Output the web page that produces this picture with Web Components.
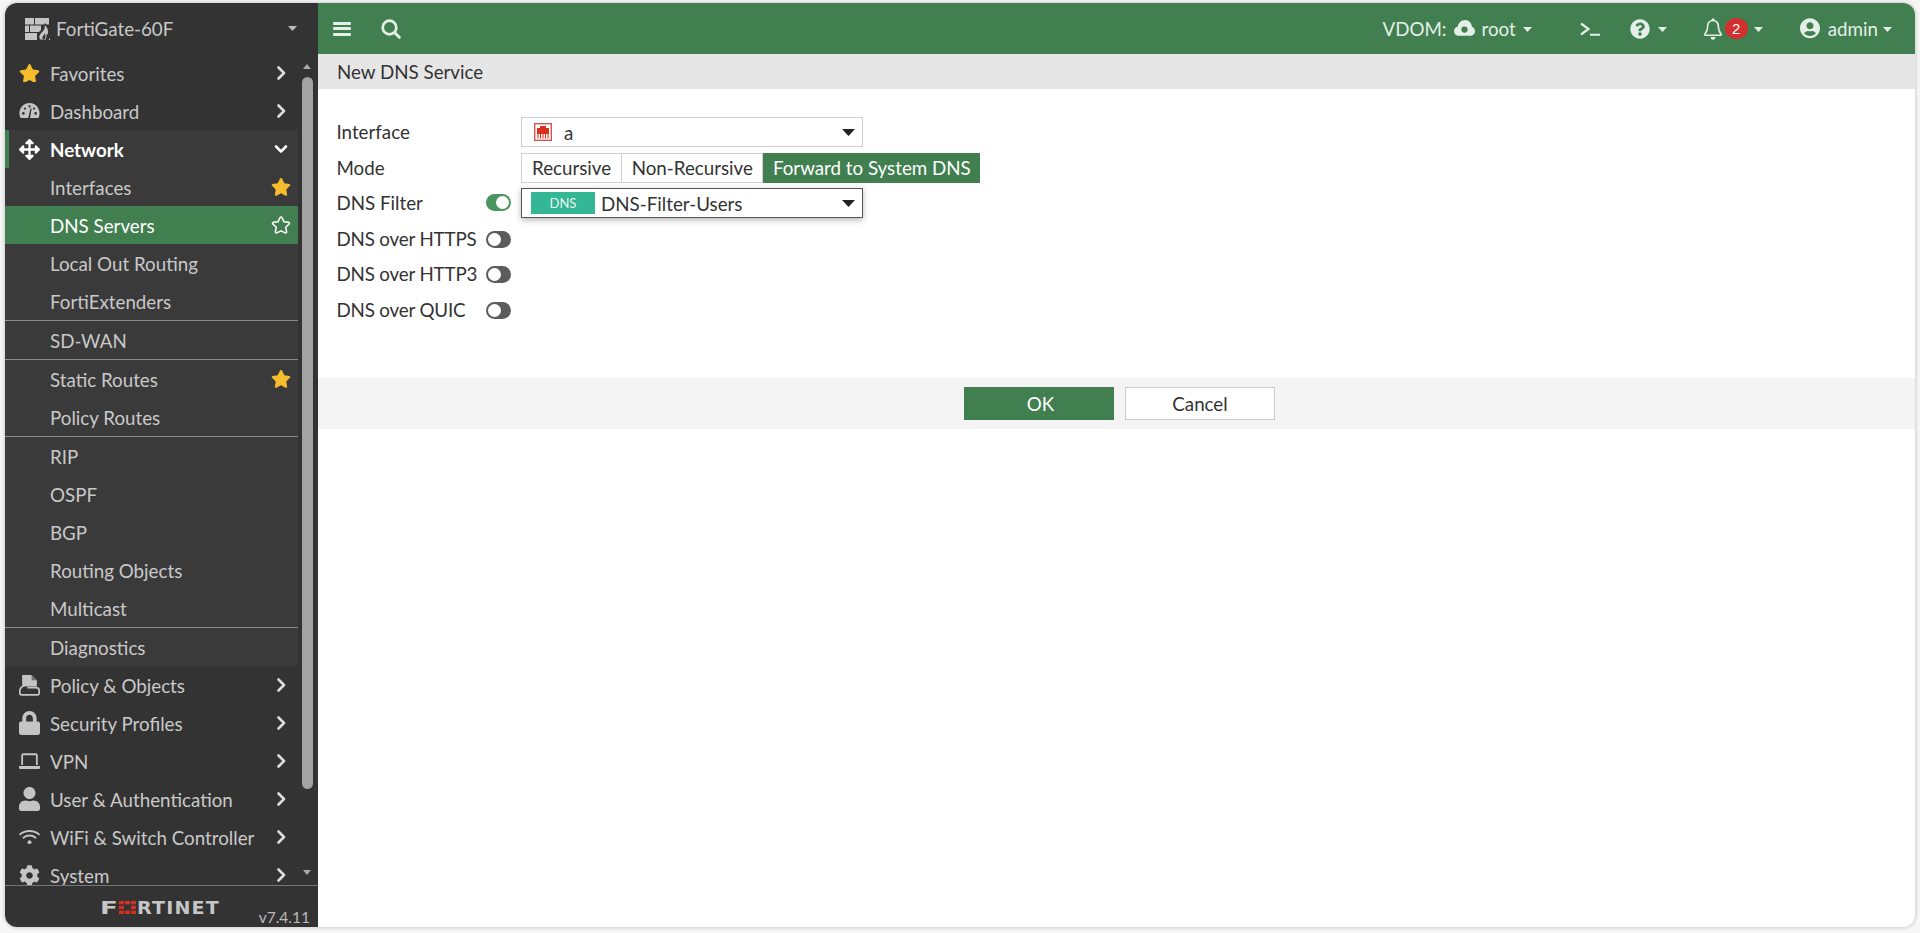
<!DOCTYPE html>
<html><head><meta charset="utf-8"><title>FortiGate-60F</title>
<style>
html,body{margin:0;height:100%;background:#f6f6f6;font-family:Lato,"Liberation Sans",sans-serif;overflow:hidden}
body{padding:3px 5px 6px 5px;box-sizing:border-box}
</style></head><body>
<x-app>
<x-sidebar slot="side">
  <x-nav icon="star" chev="right">Favorites</x-nav>
  <x-nav icon="gauge" chev="right">Dashboard</x-nav>
  <x-nav-group>
    <x-nav icon="move" chev="down" active>Network</x-nav>
    <x-nav sub fav="on">Interfaces</x-nav>
    <x-nav sub fav="off" current>DNS Servers</x-nav>
    <x-nav sub>Local Out Routing</x-nav>
    <x-nav sub>FortiExtenders</x-nav>
    <x-nav sub sep>SD-WAN</x-nav>
    <x-nav sub sep fav="on">Static Routes</x-nav>
    <x-nav sub>Policy Routes</x-nav>
    <x-nav sub sep>RIP</x-nav>
    <x-nav sub>OSPF</x-nav>
    <x-nav sub>BGP</x-nav>
    <x-nav sub>Routing Objects</x-nav>
    <x-nav sub>Multicast</x-nav>
    <x-nav sub sep>Diagnostics</x-nav>
  </x-nav-group>
  <x-nav icon="policy" chev="right">Policy &amp; Objects</x-nav>
  <x-nav icon="lock" chev="right">Security Profiles</x-nav>
  <x-nav icon="laptop" chev="right">VPN</x-nav>
  <x-nav icon="user" chev="right">User &amp; Authentication</x-nav>
  <x-nav icon="wifi" chev="right">WiFi &amp; Switch Controller</x-nav>
  <x-nav icon="cog" chev="right">System</x-nav>
</x-sidebar>
<x-topbar slot="top"></x-topbar>
<x-page slot="main" heading="New DNS Service">
  <x-row label="Interface"><x-select icon="port">a</x-select></x-row>
  <x-row label="Mode"><x-seg><x-seg-item>Recursive</x-seg-item><x-seg-item mid>Non-Recursive</x-seg-item><x-seg-item on>Forward to System DNS</x-seg-item></x-seg></x-row>
  <x-row label="DNS Filter" toggle="on"><x-select badge="DNS" focus>DNS-Filter-Users</x-select></x-row>
  <x-row label="DNS over HTTPS" toggle="off"></x-row>
  <x-row label="DNS over HTTP3" toggle="off"></x-row>
  <x-row label="DNS over QUIC" toggle="off"></x-row>
  <x-btn slot="actions" primary>OK</x-btn>
  <x-btn slot="actions">Cancel</x-btn>
</x-page>
</x-app>
<script>
const FS='18.75px';
const STAR='M259.3 17.8L194 150.2 47.9 171.5c-26.2 3.8-36.7 36.1-17.7 54.6l105.7 103-25 145.5c-4.5 26.3 23.2 46 46.4 33.7L288 439.6l130.7 68.7c23.2 12.2 50.9-7.4 46.4-33.7l-25-145.5 105.7-103c19-18.5 8.5-50.8-17.7-54.6L382 150.2 316.7 17.8c-11.7-23.6-45.6-23.9-57.4 0z';
const ICONS={
star:`<svg viewBox="0 0 576 512"><path fill="#f7bc2c" d="${STAR}"/></svg>`,
staro:`<svg viewBox="-30 -30 636 572"><path fill="none" stroke="currentColor" stroke-width="50" d="${STAR}"/></svg>`,
gauge:`<svg viewBox="0 0 24 20"><path fill="currentColor" d="M12 1C5.4 1 .5 6.300.5 13c0 2 .5 3.800 1.300 5.300h20.400c.8-1.500 1.300-3.300 1.300-5.300C23.500 6.300 18.600 1 12 1z"/><g fill="#333"><circle cx="5" cy="13" r="1.500"/><circle cx="19" cy="13" r="1.500"/><circle cx="6.800" cy="7.500" r="1.300"/><circle cx="12" cy="5" r="1.300"/><circle cx="17.200" cy="7.500" r="1.300"/><path d="M10.500 18.300l2.700-11.300 1.200.3-1.800 11z"/></g></svg>`,
move:`<svg viewBox="0 0 512 512"><path fill="currentColor" d="M352.201 425.775l-79.196 79.196c-9.373 9.373-24.568 9.373-33.941 0l-79.196-79.196c-15.119-15.119-4.411-40.971 16.971-40.97h51.162L228 284H127.196v51.162c0 21.382-25.851 32.09-40.971 16.971L7.029 272.937c-9.373-9.373-9.373-24.569 0-33.941L86.225 159.8c15.119-15.119 40.971-4.411 40.971 16.971V228H228V127.196h-51.23c-21.382 0-32.09-25.851-16.971-40.971l79.196-79.196c9.373-9.373 24.568-9.373 33.941 0l79.196 79.196c15.119 15.119 4.411 40.971-16.971 40.971h-51.162V228h100.804v-51.162c0-21.382 25.851-32.09 40.97-16.971l79.196 79.196c9.373 9.373 9.373 24.569 0 33.941L425.773 352.2c-15.119 15.119-40.971 4.411-40.97-16.971V284H284v100.804h51.23c21.382 0 32.09 25.851 16.971 40.971z"/></svg>`,
policy:`<svg viewBox="0 0 20 20"><path fill="currentColor" d="M3 0h9l5 5v6H3z"/><path fill="#333" d="M12 0v5h5z" opacity=".55"/><path fill="none" stroke="currentColor" stroke-width="1.600" d="M5 10.500C3 10.500.8 12.500.8 15v2.200c0 1 .7 1.700 1.700 1.700h15c1 0 1.700-.7 1.700-1.700V15c0-1.800-1.200-3-3-3H8"/></svg>`,
lock:`<svg viewBox="0 0 448 512"><path fill="currentColor" d="M400 224h-24v-72C376 68.200 307.800 0 224 0S72 68.200 72 152v72H48c-26.500 0-48 21.500-48 48v192c0 26.500 21.500 48 48 48h352c26.500 0 48-21.500 48-48V272c0-26.500-21.500-48-48-48zm-104 0H152v-72c0-39.700 32.300-72 72-72s72 32.300 72 72v72z"/></svg>`,
laptop:`<svg viewBox="0 0 20 16"><path fill="none" stroke="currentColor" stroke-width="1.700" d="M3 11.500V2.200c0-.6.4-1 1-1h12c.6 0 1 .4 1 1v9.300"/><path fill="currentColor" d="M0 12.500h20v1.500c0 .8-.7 1.500-1.500 1.500h-17C.7 15.500 0 14.800 0 14z"/></svg>`,
user:`<svg viewBox="0 0 448 512"><path fill="currentColor" d="M224 256c70.700 0 128-57.300 128-128S294.700 0 224 0 96 57.300 96 128s57.300 128 128 128zm89.600 32h-16.700c-22.200 10.200-46.900 16-72.900 16s-50.600-5.800-72.900-16h-16.700C60.200 288 0 348.200 0 422.400V464c0 26.500 21.500 48 48 48h352c26.500 0 48-21.500 48-48v-41.600c0-74.200-60.200-134.400-134.400-134.400z"/></svg>`,
wifi:`<svg viewBox="0 0 20 15"><g fill="none" stroke="currentColor" stroke-width="1.700" stroke-linecap="round"><path d="M1 5.200C5.800.8 14.200.8 19 5.200"/><path d="M4.200 8.300c3.200-2.800 8.400-2.800 11.600 0"/></g><circle cx="10" cy="12.500" r="1.900" fill="currentColor"/></svg>`,
cog:`<svg viewBox="0 0 512 512"><path fill="currentColor" d="M487.400 315.700l-42.600-24.600c4.300-23.200 4.300-47 0-70.200l42.600-24.600c4.900-2.800 7.100-8.600 5.500-14-11.100-35.600-30-67.800-54.700-94.600-3.800-4.100-10-5.100-14.800-2.300L380.800 110c-17.900-15.400-38.500-27.300-60.800-35.100V25.800c0-5.600-3.900-10.500-9.400-11.700-36.700-8.200-74.300-7.800-109.200 0-5.500 1.200-9.400 6.100-9.400 11.700V75c-22.200 7.900-42.800 19.800-60.800 35.100L88.700 85.500c-4.900-2.800-11-1.900-14.800 2.300-24.700 26.700-43.600 58.900-54.700 94.600-1.700 5.400.6 11.200 5.500 14L67.300 221c-4.300 23.200-4.300 47 0 70.200l-42.600 24.600c-4.900 2.800-7.100 8.600-5.500 14 11.100 35.600 30 67.800 54.700 94.600 3.800 4.100 10 5.100 14.800 2.300l42.600-24.600c17.900 15.400 38.500 27.300 60.800 35.100v49.200c0 5.600 3.900 10.500 9.400 11.700 36.700 8.200 74.300 7.800 109.200 0 5.500-1.200 9.400-6.100 9.400-11.700v-49.200c22.200-7.900 42.800-19.800 60.800-35.100l42.600 24.600c4.900 2.800 11 1.900 14.800-2.300 24.700-26.700 43.600-58.900 54.700-94.600 1.500-5.500-.7-11.300-5.600-14.100zM256 336c-44.100 0-80-35.900-80-80s35.900-80 80-80 80 35.900 80 80-35.900 80-80 80z"/></svg>`,
right:`<svg viewBox="0 0 18 18"><path fill="none" stroke="currentColor" stroke-width="2.600" stroke-linecap="round" stroke-linejoin="round" d="M6.500 3.500L12 9l-5.500 5.500"/></svg>`,
down:`<svg viewBox="0 0 18 18"><path fill="none" stroke="currentColor" stroke-width="2.600" stroke-linecap="round" stroke-linejoin="round" d="M4 6.500L9 11.500l5-5"/></svg>`,
firewall:`<svg viewBox="0 0 25 22"><g fill="#c4c4c4"><rect x="0" y="0" width="9" height="6.500"/><rect x="10" y="0" width="14" height="6.500"/><rect x="0" y="7.500" width="4" height="6.500"/><rect x="5" y="7.500" width="11" height="6.500"/><rect x="0" y="15" width="12" height="7"/></g><path fill="#333" d="M13 22c-3-5 1-8 4-11l3-6 5 6v11z"/><path fill="#c4c4c4" d="M15 21.500c-2-4 1-6 3.500-9 1-1.300 1.500-3 1.300-5.500 2 1.500 3.700 4.500 3.200 8-.2 1.200-.7 1.500-1.200 1-.4 1.500 0 3.500-1 5.500zm2.500-.5h2.500c.8-2.200.5-4 0-5.500-1.200 2-3 3-2.500 5.500zM24 20.500h1V22h-1z"/></svg>`,
port:`<svg viewBox="0 0 18 18"><rect x=".7" y=".7" width="16.600" height="16.600" fill="#fff" stroke="#d9534f" stroke-width="1.400"/><path fill="#d8321f" d="M3 11V5h3V3h6v2h3v6z"/><path stroke="#d8321f" stroke-width="1.100" d="M4 11v4.500M6.500 11v4.500M9 11v4.500M11.500 11v4.500M14 11v4.500"/></svg>`,
search:`<svg viewBox="0 0 20 20"><circle cx="8.500" cy="8.500" r="6.800" fill="none" stroke="currentColor" stroke-width="2.700"/><path stroke="currentColor" stroke-width="3" stroke-linecap="round" d="M13.800 13.800l4.500 4.500"/></svg>`,
cloud:`<svg viewBox="0 0 22 17"><path fill="currentColor" d="M5 16.500C2.200 16.500 0 14.400 0 11.700c0-2.300 1.500-4.200 3.800-4.700C4.500 3 7.700 0 11.500 0c3.400 0 6.200 2.300 7 5.500-.1 1 .2 1.200 .6 1.500 1.800 1 2.900 2.700 2.900 4.700 0 2.700-2.200 4.800-5 4.800z"/><circle cx="11" cy="10" r="3.300" fill="#417f50"/></svg>`,
cli:`<svg viewBox="0 0 20 14"><path fill="none" stroke="currentColor" stroke-width="2.200" d="M1 1.500L8.500 7 1 12.500"/><path stroke="currentColor" stroke-width="2" d="M10 12.800h10"/></svg>`,
help:`<svg viewBox="0 0 512 512"><path fill="currentColor" d="M504 256c0 136.997-111.043 248-248 248S8 392.997 8 256C8 119.083 119.043 8 256 8s248 111.083 248 248zM262.655 90c-54.497 0-89.255 22.957-116.549 63.758-3.536 5.286-2.353 12.415 2.715 16.258l34.699 26.310c5.205 3.947 12.621 3.008 16.665-2.122 17.864-22.658 30.113-35.797 57.303-35.797 20.429 0 45.698 13.148 45.698 32.958 0 14.976-12.363 22.667-32.534 33.976C247.128 238.528 216 254.941 216 296v4c0 6.627 5.373 12 12 12h56c6.627 0 12-5.373 12-12v-1.333c0-28.462 83.186-29.647 83.186-106.667 0-58.002-60.165-102-116.531-102zM256 338c-25.365 0-46 20.635-46 46 0 25.364 20.635 46 46 46s46-20.636 46-46c0-25.365-20.635-46-46-46z"/></svg>`,
bell:`<svg viewBox="0 0 18 22"><path fill="none" stroke="currentColor" stroke-width="1.600" stroke-linejoin="round" d="M9 2.500c-3.200 0-5.300 2.400-5.300 5.500 0 4.500-1 6-2.900 8.300-.3.400 0 1 .5 1h15.400c.5 0 .8-.6.500-1C15.300 14 14.300 12.500 14.300 8c0-3.100-2.100-5.500-5.300-5.500z"/><circle cx="9" cy="1.800" r="1.500" fill="currentColor"/><path fill="currentColor" d="M6.500 19h5c0 1.500-1 2.700-2.500 2.700S6.500 20.500 6.500 19z"/></svg>`,
account:`<svg viewBox="0 0 496 512"><path fill="currentColor" d="M248 8C111 8 0 119 0 256s111 248 248 248 248-111 248-248S385 8 248 8zm0 96c48.600 0 88 39.400 88 88s-39.400 88-88 88-88-39.400-88-88 39.400-88 88-88zm0 344c-58.700 0-111.300-26.600-146.500-68.200 18.800-35.400 55.600-59.800 98.500-59.800 2.400 0 4.800.4 7.100 1.100 13 4.200 26.600 6.900 40.900 6.900 14.300 0 28-2.700 40.900-6.900 2.300-.7 4.700-1.100 7.100-1.100 42.900 0 79.700 24.400 98.500 59.800C359.300 421.400 306.700 448 248 448z"/></svg>`
};
function def(name,css,html){
  customElements.define(name,class extends HTMLElement{
    constructor(){super();this.attachShadow({mode:'open'});}
    connectedCallback(){
      const h=typeof html==='function'?html(this):html;
      this.shadowRoot.innerHTML=`<style>${css}</style>${h}`;
    }
  });
}
const caret=(c)=>`<svg width="9" height="5" viewBox="0 0 9 5" style="display:block"><path fill="${c||'currentColor'}" d="M0 0h9L4.500 5z"/></svg>`;

def('x-icon',`:host{display:inline-flex;align-items:center;justify-content:center;line-height:0}svg{display:block;width:var(--w,100%);height:var(--h,auto)}`,e=>ICONS[e.getAttribute('name')]||'');

def('x-app',`:host{display:flex;height:100%;border-radius:12px;overflow:hidden;box-shadow:0 0 4px rgba(0,0,0,.25);background:#fff}
.col{flex:1;min-width:0;display:flex;flex-direction:column}`,
`<slot name="side"></slot><div class="col"><slot name="top"></slot><slot name="main"></slot></div>`);

def('x-sidebar',`:host{display:flex;flex-direction:column;width:313px;flex:none;background:#333;color:#ccc;position:relative;font-size:${FS}}
.head{height:51px;flex:none;display:flex;align-items:center;padding:0 21px 0 20px;color:#c8c8c8;box-sizing:border-box}
.head x-icon{width:25px;height:22px;margin-right:6px}
.head span{flex:1;font-size:${FS}}
.head .c{color:#bbb}
.nav{flex:1;min-height:0;overflow:hidden;width:293px}
.foot{height:42px;flex:none;border-top:1px solid #777;width:313px;box-sizing:border-box;display:flex}
.foot x-logo{margin:15px 0 0 95px}
.ver{margin:22px 8px 0 auto;font-size:15.500px;color:#bbb;line-height:18px}
.thumb{position:absolute;left:297px;top:74px;width:11px;height:712px;background:#a3a3a3;border-radius:6px}
.up,.dn{position:absolute;left:298px;width:0;height:0;border-left:4.500px solid transparent;border-right:4.500px solid transparent}
.up{top:61px;border-bottom:5px solid #aaa}.dn{top:867px;border-top:5px solid #aaa}`,
`<div class="head"><x-icon name="firewall"></x-icon><span>FortiGate-60F</span><div class="c">${caret()}</div></div>
<div class="nav"><slot></slot></div>
<div class="foot"><x-logo></x-logo><div class="ver">v7.4.11</div></div>
<div class="up"></div><div class="thumb"></div><div class="dn"></div>`);

def('x-nav-group',`:host{display:block;background:#3a3a3a}`,`<slot></slot>`);

def('x-nav',`:host{display:flex;align-items:center;height:38px;box-sizing:border-box;color:#c9c9c9;font-size:${FS};padding-right:8px}
:host([sep]){height:39px;border-top:1px solid #8a8a8a}
:host([active]){color:#fff;font-weight:700;box-shadow:inset 4px 0 0 #417f50}
:host([current]){background:#417f50;color:#fff}
.i{width:45px;flex:none;display:flex;justify-content:center;padding-left:4px;box-sizing:border-box}
.i x-icon{width:21px;height:20px;color:#c4c4c4}
:host([active]) .i x-icon{color:#fff}
.t{flex:1;white-space:nowrap}
.r{width:18px;height:18px;flex:none;color:#ddd;display:flex;align-items:center;justify-content:center}
.r x-icon{width:18px;height:18px;flex:none}
.r x-icon.s{width:20px;height:19px}
:host([active]) .r{color:#fff}`,
e=>{const ic=e.getAttribute('icon'),ch=e.getAttribute('chev'),f=e.getAttribute('fav');
 const r=ch?`<x-icon name="${ch}"></x-icon>`:f==='on'?`<x-icon class="s" name="star"></x-icon>`:f==='off'?`<x-icon class="s" name="staro" style="color:#fff"></x-icon>`:'';
 return `<div class="i">${ic?`<x-icon name="${ic}"></x-icon>`:''}</div><div class="t"><slot></slot></div><div class="r">${r}</div>`;});

def('x-logo',`:host{display:flex;align-items:center;height:13px;color:#c6c6c6;font:700 18px/13px "DejaVu Sans",sans-serif}
.f{display:inline-block;width:18px;transform:scaleX(1.45);transform-origin:left center}
svg{width:17px;height:13px;display:block;margin-right:1px;margin-left:1px}
.r{display:inline-block;transform:scaleX(1.06);transform-origin:left center;letter-spacing:1.100px;white-space:nowrap}`,
`<span class="f">F</span><svg viewBox="0 0 17 13"><g fill="#d3301f"><rect width="5" height="3.400"/><rect x="6" width="5" height="3.400"/><rect x="12" width="5" height="3.400"/><rect y="4.800" width="5" height="3.400"/><rect x="12" y="4.800" width="5" height="3.400"/><rect y="9.600" width="5" height="3.400"/><rect x="6" y="9.600" width="5" height="3.400"/><rect x="12" y="9.600" width="5" height="3.400"/></g></svg><span class="r">RTINET</span>`);

def('x-topbar',`:host{display:flex;align-items:center;height:51px;flex:none;background:#417f50;color:#e4efe7;font-size:${FS};padding:0 23px 0 15px;box-sizing:border-box}
x-icon{flex:none}
.sp{flex:1}
.ham{width:18px;height:14px;display:flex;flex-direction:column;justify-content:space-between}
.ham i{display:block;height:3px;border-radius:1px;background:currentColor}
.c{flex:none;margin-left:7px;margin-top:1px}
.g{display:flex;align-items:center;flex:none}
.badge{width:23px;height:21px;border-radius:50%;background:#d32f2f;color:#fff;font-size:15px;line-height:21px;text-align:center;margin-left:3px;font-family:"Liberation Sans",sans-serif}`,
`<div class="ham"><i></i><i></i><i></i></div>
<x-icon name="search" style="width:20px;height:20px;margin-left:30px"></x-icon>
<div class="sp"></div>
<div class="g"><span>VDOM:</span><x-icon name="cloud" style="width:21px;height:17px;margin:0 7px 0 7px"></x-icon><span>root</span><div class="c">${caret()}</div></div>
<x-icon name="cli" style="width:20px;height:14px;margin-left:48px"></x-icon>
<x-icon name="help" style="width:20px;height:20px;margin-left:30px"></x-icon><div class="c" style="margin-left:8px">${caret()}</div>
<x-icon name="bell" style="width:18px;height:21px;margin-left:37px"></x-icon><div class="badge">2</div><div class="c" style="margin-left:6px">${caret()}</div>
<x-icon name="account" style="width:20px;height:20px;margin-left:37px"></x-icon><span style="margin-left:8px">admin</span><div class="c" style="margin-left:5px">${caret()}</div>`);

def('x-page',`:host{display:flex;flex-direction:column;flex:1;min-height:0;color:#333;font-size:${FS}}
.title{height:35px;flex:none;background:#e6e6e6;display:flex;align-items:center;padding-left:19px;box-sizing:border-box}
.form{height:289px;flex:none;box-sizing:border-box;padding:28px 0 0 18.500px;display:flex;flex-direction:column;gap:5.600px}
.act{height:51px;flex:none;background:#f4f4f4;display:flex;align-items:center;justify-content:center;gap:11px;padding-left:6px;box-sizing:border-box}`,
e=>`<div class="title">${e.getAttribute('heading')}</div><div class="form"><slot></slot></div><div class="act"><slot name="actions"></slot></div>`);

def('x-row',`:host{display:flex;align-items:center;height:30px;flex:none}
.l{width:184.500px;flex:none;display:flex;align-items:center;box-sizing:border-box;padding-right:10px;white-space:nowrap;padding-bottom:1px}
.l span{flex:1}
.tight{letter-spacing:-.17px}
.tight+x-toggle{margin-top:2px}`,
e=>{const t=e.getAttribute('toggle');return `<div class="l"><span class="${t==='off'?'tight':''}">${e.getAttribute('label')}</span>${t?`<x-toggle ${t==='on'?'on':''}></x-toggle>`:''}</div><slot></slot>`;});

def('x-toggle',`:host{display:block;position:relative;width:25px;height:17px;border-radius:9px;background:#5c5c5c;flex:none}
:host([on]){background:#4b9561}
i{position:absolute;left:2px;top:2px;width:13px;height:13px;border-radius:50%;background:#fff}
:host([on]) i{left:10px}`,`<i></i>`);

def('x-select',`:host{display:flex;align-items:center;width:342px;height:30px;box-sizing:border-box;border:1px solid #d0d0d0;background:#fff;padding:0 7px 0 12px;color:#333;font-size:${FS}}
:host([focus]){border-color:#555;box-shadow:0 2px 6px rgba(0,0,0,.3);padding-left:9px}
.t{flex:1;white-space:nowrap}
.port{width:18px;height:18px;margin-right:12px}
.b{width:64px;height:22px;background:#33b795;color:#e8f7f2;font-size:13px;line-height:22px;text-align:center;margin-right:6px}`,
e=>{const i=e.getAttribute('icon'),b=e.getAttribute('badge');
return `${i?`<x-icon class="port" name="${i}"></x-icon>`:''}${b?`<div class="b">${b}</div>`:''}<div class="t"><slot></slot></div><div><svg width="13" height="7" viewBox="0 0 13 7" style="display:block"><path fill="#222" d="M0 0h13L6.500 7z"/></svg></div>`;});

def('x-seg',`:host{display:flex;height:30px}`,`<slot></slot>`);
def('x-seg-item',`:host{display:flex;align-items:center;height:30px;box-sizing:border-box;padding:0 10px;border:1px solid #d0d0d0;border-left-width:0;background:#fff;white-space:nowrap;font-size:${FS};color:#333}
:host(:first-child){border-left-width:1px}
:host([mid]){padding:0 9.500px}
:host([on]){background:#417f50;color:#fff;border-color:#417f50;padding:0 8.500px 0 9.500px}`,`<slot></slot>`);

def('x-btn',`:host{display:flex;align-items:center;justify-content:center;width:150px;height:33px;box-sizing:border-box;border:1px solid #ccc;background:#fff;color:#333;font-size:${FS}}
:host([primary]){background:#417f50;border-color:#417f50;color:#fff;padding-left:3px}`,`<slot></slot>`);
</script>
</body></html>
